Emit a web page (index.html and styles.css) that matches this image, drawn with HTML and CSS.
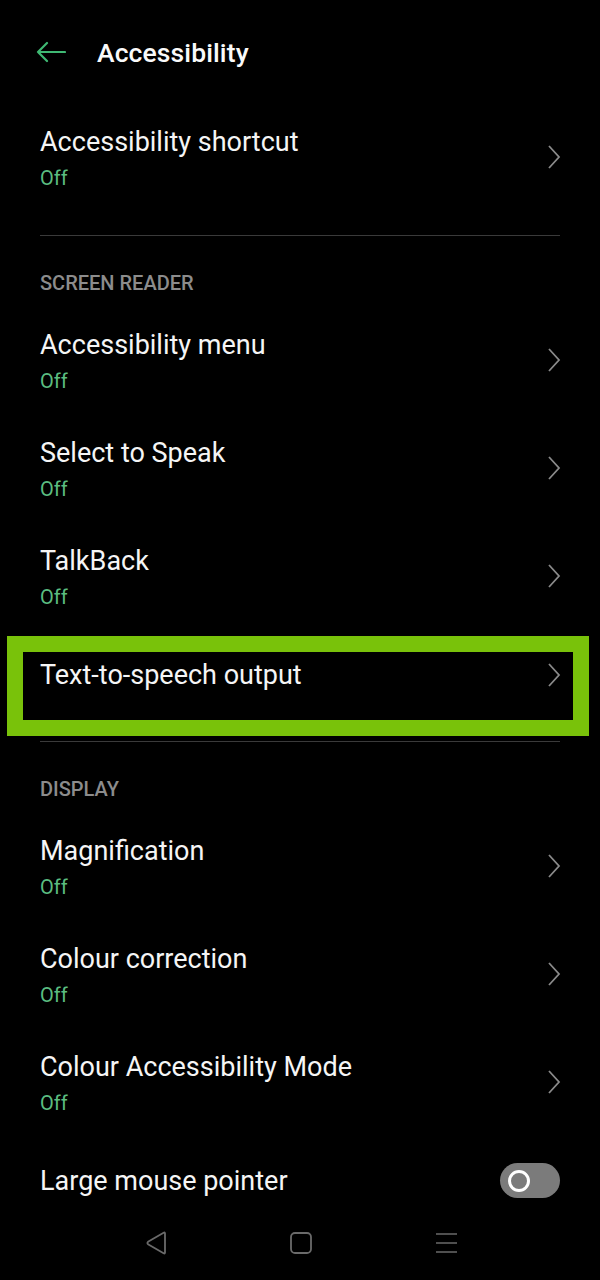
FILE: index.html
```html
<!DOCTYPE html>
<html>
<head>
<meta charset="utf-8">
<link rel="stylesheet" href="styles.css">
</head>
<body>
<div class="screen">
  <header class="appbar">
    <svg class="back" width="30" height="22" viewBox="0 0 30 22"><path d="M2 11H29M11 2L2 11L11 20" fill="none" stroke="#3fb873" stroke-width="2.2" stroke-linecap="round" stroke-linejoin="round"/></svg>
    <h1 class="appbar-title">Accessibility</h1>
  </header>

  <div class="row first">
    <div class="row-text"><div class="row-title">Accessibility shortcut</div><div class="row-sub">Off</div></div>
    <svg class="chev" width="14" height="26" viewBox="0 0 14 26"><path d="M2 2L12 13L2 24" fill="none" stroke="#8a8a8a" stroke-width="1.8"/></svg>
  </div>
  <div class="divider top-gap"></div>

  <div class="section-label">SCREEN READER</div>
  <div class="row">
    <div class="row-text"><div class="row-title">Accessibility menu</div><div class="row-sub">Off</div></div>
    <svg class="chev" width="14" height="26" viewBox="0 0 14 26"><path d="M2 2L12 13L2 24" fill="none" stroke="#8a8a8a" stroke-width="1.8"/></svg>
  </div>
  <div class="row">
    <div class="row-text"><div class="row-title">Select to Speak</div><div class="row-sub">Off</div></div>
    <svg class="chev" width="14" height="26" viewBox="0 0 14 26"><path d="M2 2L12 13L2 24" fill="none" stroke="#8a8a8a" stroke-width="1.8"/></svg>
  </div>
  <div class="row">
    <div class="row-text"><div class="row-title">TalkBack</div><div class="row-sub">Off</div></div>
    <svg class="chev" width="14" height="26" viewBox="0 0 14 26"><path d="M2 2L12 13L2 24" fill="none" stroke="#8a8a8a" stroke-width="1.8"/></svg>
  </div>
  <div class="row single highlighted">
    <div class="row-text"><div class="row-title">Text-to-speech output</div></div>
    <svg class="chev" width="14" height="26" viewBox="0 0 14 26"><path d="M2 2L12 13L2 24" fill="none" stroke="#8a8a8a" stroke-width="1.8"/></svg>
    <div class="highlight-box"></div>
  </div>
  <div class="divider"></div>

  <div class="section-label">DISPLAY</div>
  <div class="row">
    <div class="row-text"><div class="row-title">Magnification</div><div class="row-sub">Off</div></div>
    <svg class="chev" width="14" height="26" viewBox="0 0 14 26"><path d="M2 2L12 13L2 24" fill="none" stroke="#8a8a8a" stroke-width="1.8"/></svg>
  </div>
  <div class="row">
    <div class="row-text"><div class="row-title">Colour correction</div><div class="row-sub">Off</div></div>
    <svg class="chev" width="14" height="26" viewBox="0 0 14 26"><path d="M2 2L12 13L2 24" fill="none" stroke="#8a8a8a" stroke-width="1.8"/></svg>
  </div>
  <div class="row">
    <div class="row-text"><div class="row-title">Colour Accessibility Mode</div><div class="row-sub">Off</div></div>
    <svg class="chev" width="14" height="26" viewBox="0 0 14 26"><path d="M2 2L12 13L2 24" fill="none" stroke="#8a8a8a" stroke-width="1.8"/></svg>
  </div>
  <div class="row single">
    <div class="row-text"><div class="row-title">Large mouse pointer</div></div>
    <div class="toggle"><span class="knob"></span></div>
  </div>

  <nav class="navbar">
    <svg width="24" height="24" viewBox="0 0 24 24"><path d="M21 2.5V21.5Q21 23 19.6 22.2L4 13.2Q2.8 12 4 10.8L19.6 1.8Q21 1 21 2.5Z" fill="none" stroke="#6a6a6a" stroke-width="1.8" stroke-linejoin="round"/></svg>
    <svg width="24" height="24" viewBox="0 0 24 24"><rect x="2" y="2" width="20" height="20" rx="4" fill="none" stroke="#6a6a6a" stroke-width="1.8"/></svg>
    <svg width="24" height="24" viewBox="0 0 24 24"><path d="M2 3H23M2 12H23M2 21H23" stroke="#6a6a6a" stroke-width="1.6"/></svg>
  </nav>
</div>
</body>
</html>
```
FILE: styles.css
```css
* { box-sizing: border-box; margin: 0; padding: 0; }
html, body { background: #000; }
body { width: 600px; height: 1280px; overflow: hidden; font-family: Roboto, "Liberation Sans", sans-serif; color: #fff; }
.screen { position: relative; height: 1280px; display: flex; flex-direction: column; }

.appbar { height: 106px; display: flex; align-items: center; padding-left: 36px; padding-bottom: 2px; }
.back { margin-right: 31px; }
.appbar-title { font-size: 26.5px; font-weight: 500; color: #fafafa; letter-spacing: 0.1px; }

.row { position: relative; height: 108px; padding: 18px 40px; display: flex; align-items: center; justify-content: space-between; flex-shrink: 0; }
.row.single { align-items: flex-start; padding-top: 24px; }
.row-title { font-size: 27px; line-height: 36px; color: #f5f5f5; }
.row-sub { font-size: 20px; line-height: 36px; color: #5bbd80; }
.chev { margin-right: -1px; margin-top: -6px; }
.row.single .chev { margin-top: 5px; }

.divider { height: 1px; background: #3a3a3a; margin: 0 40px; flex-shrink: 0; }
.divider.top-gap { margin-top: 21px; }

.section-label { padding: 35px 40px 14px; font-size: 20px; line-height: 24px; font-weight: 500; color: #8c8c8c; letter-spacing: 0; }

.highlight-box { position: absolute; left: 7px; top: 3px; width: 582px; height: 100px; border: 16px solid #79c20a; pointer-events: none; }

.toggle { width: 60px; height: 35px; border-radius: 18px; background: #7b7b7b; margin-top: 0px; display: flex; align-items: center; padding-left: 8px; }
.knob { width: 22px; height: 22px; border-radius: 50%; border: 3.5px solid #fff; background: #7b7b7b; }

.navbar { position: absolute; left: 0; right: 0; bottom: 0; height: 74px; background: #000; display: flex; align-items: center; justify-content: center; gap: 121px; padding-left: 2px; }
```
